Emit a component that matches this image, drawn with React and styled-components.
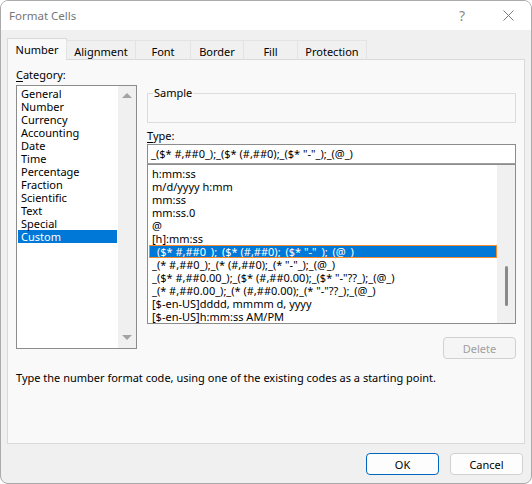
import React from 'react';
import styled, { createGlobalStyle } from 'styled-components';

const GlobalStyle = createGlobalStyle`
  html, body {
    margin: 0;
    padding: 0;
    background: #ffffff;
  }
  * {
    box-sizing: border-box;
  }
`;

const Window = styled.div`
  width: 532px;
  height: 484px;
  border: 1px solid #ababab;
  border-radius: 8px;
  background: #f0f0f0;
  overflow: hidden;
  font-family: 'Noto Sans', 'Liberation Sans', sans-serif;
  font-size: 11px;
  color: #000;
  display: flex;
  flex-direction: column;
`;

const TitleBar = styled.div`
  height: 29px;
  background: #ffffff;
  display: flex;
  align-items: center;
  padding-left: 8px;
  flex-shrink: 0;
`;

const Title = styled.div`
  flex: 1;
  color: #767676;
  font-size: 11.5px;
`;

const TitleButton = styled.div`
  width: 46px;
  text-align: center;
  color: #8a8a8a;
  font-size: ${(p) => p.size || 13}px;
  display: flex;
  justify-content: center;
  align-items: center;
`;

const Body = styled.div`
  flex: 1;
  padding: 8px 6px 0 6px;
  display: flex;
  flex-direction: column;
`;

const TabRow = styled.div`
  display: flex;
  align-items: flex-end;
  height: 22px;
  position: relative;
  z-index: 1;
`;

const Tab = styled.div`
  width: ${(p) => p.w}px;
  height: ${(p) => (p.active ? 22 : 20)}px;
  margin-left: -1px;
  border: 1px solid ${(p) => (p.active ? '#d9d9d9' : '#e3e3e3')};
  border-bottom: ${(p) => (p.active ? 'none' : '1px solid #d9d9d9')};
  background: ${(p) => (p.active ? '#f9f9f9' : '#f0f0f0')};
  display: flex;
  align-items: center;
  justify-content: center;
  padding-top: ${(p) => (p.active ? 0 : 2)}px;
  &:first-child {
    margin-left: 0;
  }
`;

const Panel = styled.div`
  height: 385px;
  margin-top: -1px;
  border: 1px solid #d9d9d9;
  background: #f9f9f9;
  padding: 7px 8px 0 8px;
  display: flex;
  flex-direction: column;
`;

const Columns = styled.div`
  display: flex;
  gap: 10px;
`;

const LeftCol = styled.div`
  width: 121px;
  display: flex;
  flex-direction: column;
`;

const RightCol = styled.div`
  flex: 1;
  display: flex;
  flex-direction: column;
`;

const Label = styled.div`
  line-height: 16px;
  height: 16px;
  margin-top: ${(p) => p.mt || 0}px;
  u {
    text-decoration: underline;
    text-underline-offset: 2px;
  }
`;

const ListBox = styled.div`
  height: ${(p) => p.h}px;
  border: 1px solid #8c8c8c;
  background: #ffffff;
  display: flex;
  margin-top: ${(p) => p.mt || 0}px;
`;

const Items = styled.div`
  flex: 1;
  padding: ${(p) => p.pad || '1px'};
`;

const Item = styled.div`
  height: 13px;
  line-height: 13px;
  padding-left: 3px;
  white-space: nowrap;
  color: ${(p) => (p.selected ? '#ffffff' : '#000')};
  background: ${(p) => (p.selected ? '#0078d7' : 'transparent')};
  outline: ${(p) => (p.focused ? '1px solid #f7892b' : 'none')};
  outline-offset: -1px;
`;

const ScrollTrack = styled.div`
  width: 18px;
  background: #f0f0f0;
  display: flex;
  flex-direction: column;
  justify-content: ${(p) => (p.arrows ? 'space-between' : 'flex-start')};
  align-items: center;
  padding: ${(p) => (p.arrows ? '7px 0 8px' : '101px 0 0')};
`;

const Arrow = styled.div`
  width: 0;
  height: 0;
  border-left: 5px solid transparent;
  border-right: 5px solid transparent;
  ${(p) =>
    p.down ? 'border-top: 5px solid #a3a3a3;' : 'border-bottom: 5px solid #a3a3a3;'}
`;

const Thumb = styled.div`
  width: 3px;
  height: 40px;
  border-radius: 2px;
  background: #8a8a8a;
`;

const Group = styled.div`
  position: relative;
  height: 30px;
  margin-top: 26px;
  border: 1px solid #dcdcdc;
`;

const Legend = styled.span`
  position: absolute;
  top: -9px;
  left: 5px;
  padding: 0 1px;
  background: #f9f9f9;
  line-height: 16px;
`;

const TextInput = styled.div`
  height: 20px;
  border: 1px solid #8c8c8c;
  border-bottom-color: #a0a0a0;
  background: #ffffff;
  padding-left: 3px;
  line-height: 18px;
  white-space: nowrap;
`;

const Button = styled.div`
  width: 73px;
  height: 22px;
  border: 1px solid ${(p) => (p.primary ? '#0067c0' : '#d1d1d1')};
  border-radius: 4px;
  background: ${(p) => (p.disabled ? '#f5f5f5' : '#fdfdfd')};
  color: ${(p) => (p.disabled ? '#a0a0a0' : '#000')};
  display: flex;
  align-items: center;
  justify-content: center;
`;

const DeleteRow = styled.div`
  display: flex;
  justify-content: flex-end;
  margin-top: 13px;
`;

const Description = styled.div`
  margin-top: 11px;
  line-height: 16px;
`;

const Footer = styled.div`
  display: flex;
  justify-content: flex-end;
  gap: 11px;
  padding: 9px 2px 0 0;
`;

const tabs = [
  { name: 'Number', w: 60 },
  { name: 'Alignment', w: 70 },
  { name: 'Font', w: 56 },
  { name: 'Border', w: 54 },
  { name: 'Fill', w: 55 },
  { name: 'Protection', w: 70 },
];

const categories = [
  'General',
  'Number',
  'Currency',
  'Accounting',
  'Date',
  'Time',
  'Percentage',
  'Fraction',
  'Scientific',
  'Text',
  'Special',
  'Custom',
];

const types = [
  'h:mm:ss',
  'm/d/yyyy h:mm',
  'mm:ss',
  'mm:ss.0',
  '@',
  '[h]:mm:ss',
  '_($* #,##0_);_($* (#,##0);_($* "-"_);_(@_)',
  '_(* #,##0_);_(* (#,##0);_(* "-"_);_(@_)',
  '_($* #,##0.00_);_($* (#,##0.00);_($* "-"??_);_(@_)',
  '_(* #,##0.00_);_(* (#,##0.00);_(* "-"??_);_(@_)',
  '[$-en-US]dddd, mmmm d, yyyy',
  '[$-en-US]h:mm:ss AM/PM',
];

function App() {
  return (
    <>
      <GlobalStyle />
      <Window>
        <TitleBar>
          <Title>Format Cells</Title>
          <TitleButton size={14}>?</TitleButton>
          <TitleButton>
            <svg width="11" height="11" viewBox="0 0 11 11">
              <path d="M0.5 0.5 L10.5 10.5 M10.5 0.5 L0.5 10.5" stroke="#7a7a7a" strokeWidth="1" />
            </svg>
          </TitleButton>
        </TitleBar>
        <Body>
          <TabRow>
            {tabs.map((t, i) => (
              <Tab key={t.name} w={t.w} active={i === 0}>
                {t.name}
              </Tab>
            ))}
          </TabRow>
          <Panel>
            <Columns>
              <LeftCol>
                <Label>
                  <u>C</u>ategory:
                </Label>
                <ListBox h={264} mt={2}>
                  <Items>
                    {categories.map((c) => (
                      <Item key={c} selected={c === 'Custom'}>
                        {c}
                      </Item>
                    ))}
                  </Items>
                  <ScrollTrack arrows>
                    <Arrow />
                    <Arrow down />
                  </ScrollTrack>
                </ListBox>
              </LeftCol>
              <RightCol>
                <Group>
                  <Legend>Sample</Legend>
                </Group>
                <Label mt={5}>
                  <u>T</u>ype:
                </Label>
                <TextInput>{types[6]}</TextInput>
                <ListBox h={160}>
                  <Items pad="2px 0 0 1px">
                    {types.map((t, i) => (
                      <Item key={t} selected={i === 6} focused={i === 6}>
                        {t}
                      </Item>
                    ))}
                  </Items>
                  <ScrollTrack>
                    <Thumb />
                  </ScrollTrack>
                </ListBox>
                <DeleteRow>
                  <Button disabled>Delete</Button>
                </DeleteRow>
              </RightCol>
            </Columns>
            <Description>
              Type the number format code, using one of the existing codes as a starting point.
            </Description>
          </Panel>
          <Footer>
            <Button primary>OK</Button>
            <Button>Cancel</Button>
          </Footer>
        </Body>
      </Window>
    </>
  );
}

export default App;
